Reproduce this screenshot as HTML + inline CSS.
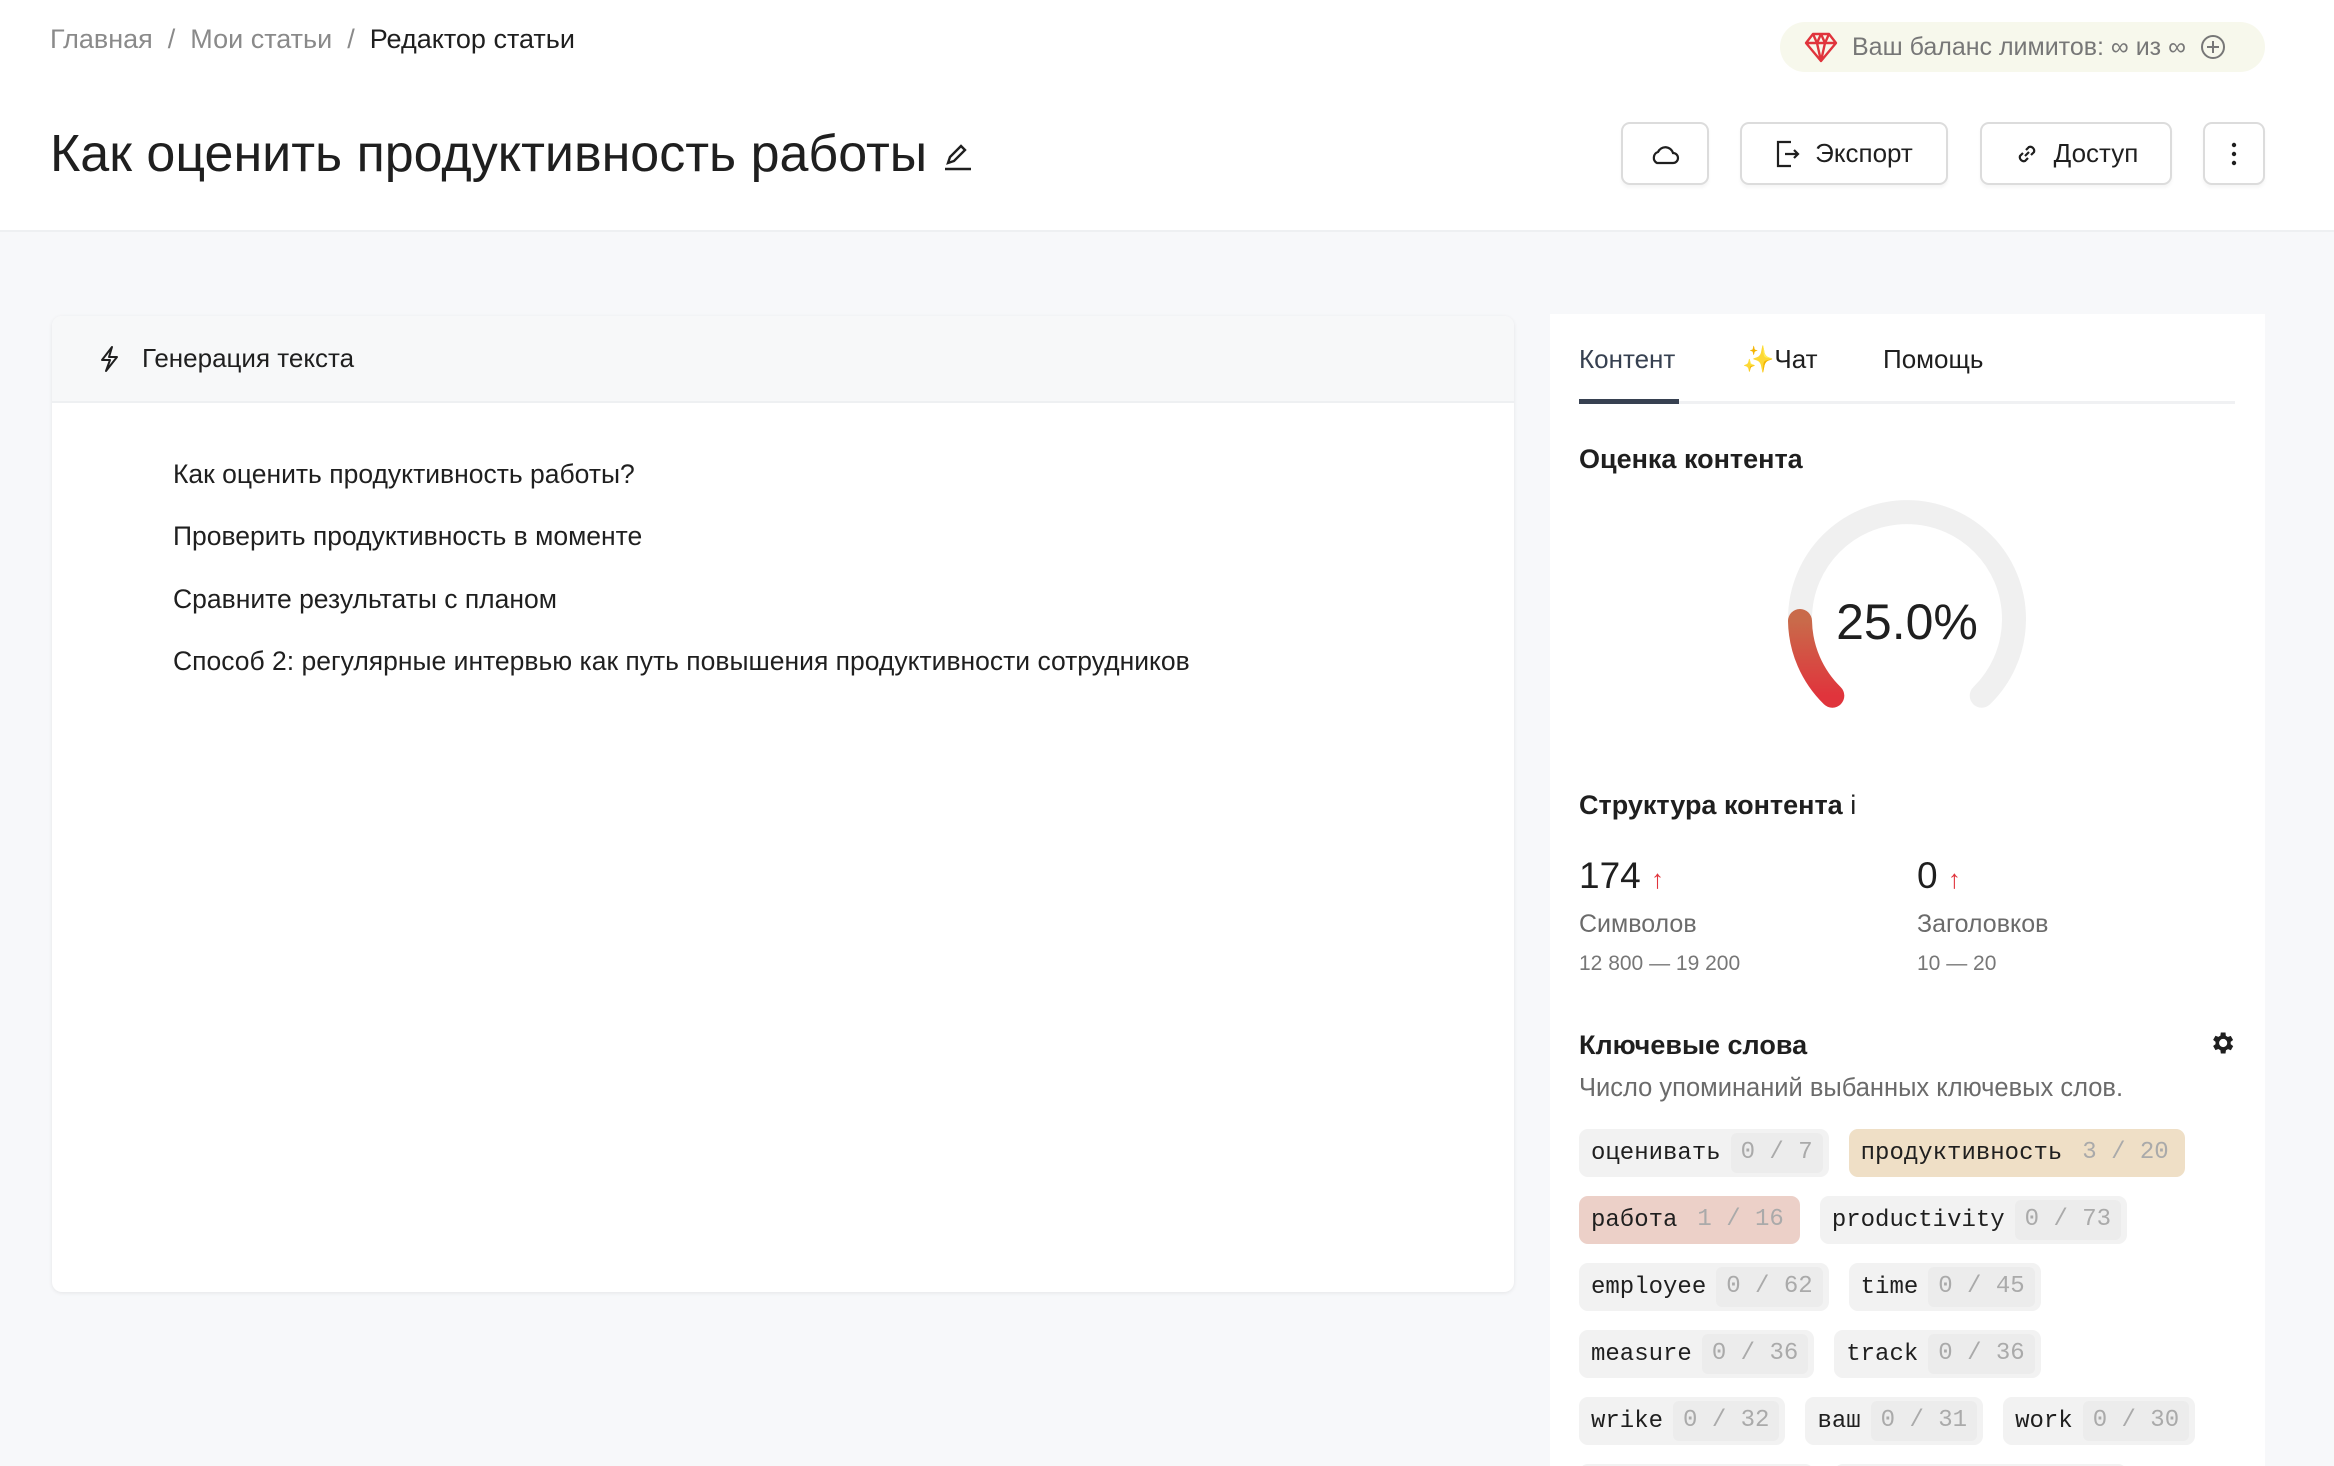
<!DOCTYPE html>
<html style="width:2334px;height:1466px;overflow:hidden"><head><meta charset="utf-8"><style>
*{box-sizing:border-box;margin:0;padding:0}
body{width:2334px;height:1466px;overflow:hidden;background:#f7f8fa;font-family:"Liberation Sans","Noto Sans CJK SC",sans-serif;color:#1f1f1f;position:relative}
.hdr{position:absolute;left:0;top:0;width:2334px;height:232px;background:#fff;border-bottom:2px solid #eef0f2}
.abs{position:absolute}
.bc{left:50px;top:24px;font-size:27px;color:#8a8a8a}
.bc b{font-weight:normal;color:#1f1f1f}
.bc span{margin:0 15px}
.pill{left:1780px;top:22px;width:485px;height:50px;border-radius:25px;background:#f7f8ec;font-size:25px;color:#777;display:flex;align-items:center;padding-left:24px;gap:14px}
.title{left:50px;top:124px;font-size:52px;color:#1f1f1f}
.btn{top:122px;height:63px;border:2px solid #dcdcdc;border-radius:9px;background:#fff;display:flex;align-items:center;justify-content:center;gap:14px;font-size:26px;box-shadow:0 3px 3px rgba(0,0,0,.04)}
.card{left:52px;top:316px;width:1462px;height:976px;background:#fff;border-radius:10px;box-shadow:0 1px 4px rgba(0,0,0,.08);overflow:hidden}
.ch{height:87px;background:#f7f8f9;border-bottom:2px solid #eef0f2;display:flex;align-items:center;padding-left:46px;gap:22px;font-size:26px}
.line{position:absolute;left:121px;font-size:26.5px}
.rp{left:1550px;top:314px;width:715px;height:1152px;background:#fff;overflow:hidden}
.tab{top:30px;font-size:26px}
.sec{font-size:27px;font-weight:bold;left:29px}
.chips{left:29px;top:815px;width:680px;display:flex;flex-wrap:wrap;column-gap:20px;row-gap:19px}
.chip{height:48px;border-radius:9px;background:#f2f2f2;display:flex;align-items:center;padding:0 6px 0 12px;font-family:"Liberation Mono",monospace;font-size:24px;color:#1f1f1f}
.chip i{font-style:normal;color:#aaa;background:#ececec;padding:0 10px;height:40px;line-height:40px;margin-left:10px;border-radius:6px;white-space:pre}
</style></head><body>
<div class="hdr"></div>
<div class="abs bc">Главная<span>/</span>Мои статьи<span>/</span><b>Редактор статьи</b></div>
<div class="abs pill"><svg width="34" height="32" viewBox="0 0 34 32" fill="none" stroke="#e0343c" stroke-width="2.4" stroke-linejoin="round"><path d="M9 3h16l7 9-15 18L2 12z M2 12h30 M9 3l4 9 4 18 4-18 4-9 M13 12l4-9 4 9"/></svg><span>Ваш баланс лимитов: ∞ из ∞</span><svg width="26" height="26" viewBox="0 0 26 26" fill="none" stroke="#777" stroke-width="2"><circle cx="13" cy="13" r="11"/><path d="M13 7v12M7 13h12"/></svg></div>
<div class="abs title">Как оценить продуктивность работы <svg width="30" height="30" viewBox="0 0 30 30" fill="none" stroke="#1f1f1f" stroke-width="2.4"><path d="M6 22l2-6 11-11 4 4-11 11z M3 28h26"/></svg></div>
<div class="abs btn" style="left:1621px;width:88px"><svg width="30" height="22" viewBox="0 0 30 22" fill="none" stroke="#1f1f1f" stroke-width="2.2"><path d="M7 20h16a5 5 0 000-10 8 8 0 00-15-1 6 6 0 00-1 11z"/></svg></div>
<div class="abs btn" style="left:1740px;width:208px"><svg width="26" height="28" viewBox="0 0 26 28" fill="none" stroke="#1f1f1f" stroke-width="2.2"><path d="M16 2H3v24h13M10 14h13M19 10l4 4-4 4"/></svg>Экспорт</div>
<div class="abs btn" style="left:1980px;width:192px"><svg width="26" height="26" viewBox="0 0 26 26" fill="none" stroke="#1f1f1f" stroke-width="2.2"><path d="M11 15l4-4M9 12l-3 3a4 4 0 005 5l3-3M17 14l3-3a4 4 0 00-5-5l-3 3"/></svg>Доступ</div>
<div class="abs btn" style="left:2203px;width:62px"><svg width="6" height="24" viewBox="0 0 6 24" fill="#1f1f1f"><circle cx="3" cy="3" r="2.2"/><circle cx="3" cy="12" r="2.2"/><circle cx="3" cy="21" r="2.2"/></svg></div>

<div class="abs card">
<div class="ch"><svg width="22" height="28" viewBox="0 0 22 28" fill="none" stroke="#1f1f1f" stroke-width="2" stroke-linejoin="round"><path d="M14 2L4 15h8l-4 11 11-14h-8z"/></svg>Генерация текста</div>
<div class="line" style="top:143px">Как оценить продуктивность работы?</div>
<div class="line" style="top:205px">Проверить продуктивность в моменте</div>
<div class="line" style="top:268px">Сравните результаты с планом</div>
<div class="line" style="top:330px">Способ 2: регулярные интервью как путь повышения продуктивности сотрудников</div>
</div>

<div class="abs rp">
<div class="abs tab" style="left:29px;color:#374151">Контент</div>
<div class="abs tab" style="left:192px"><span style="color:#f5c542">✨</span>Чат</div>
<div class="abs tab" style="left:333px">Помощь</div>
<div class="abs" style="left:29px;top:87px;width:656px;height:3px;background:#f0f1f3"></div>
<div class="abs" style="left:29px;top:85px;width:100px;height:5px;background:#374151"></div>
<div class="abs sec" style="top:130px">Оценка контента</div>
<svg class="abs" style="left:229px;top:179px" width="256" height="256" viewBox="0 0 256 256">
<defs><linearGradient id="g" x1="0" y1="1" x2="0" y2="0"><stop offset="0" stop-color="#e0343c"/><stop offset="1" stop-color="#c96a4a"/></linearGradient></defs>
<path d="M53.3 202.7A107 107 0 1 1 202.7 202.7" fill="none" stroke="#f0f0f0" stroke-width="24" stroke-linecap="round"/>
<path d="M53.3 202.7A107 107 0 0 1 21 128" fill="none" stroke="url(#g)" stroke-width="24" stroke-linecap="round"/>
<text x="128" y="146" text-anchor="middle" font-family="Liberation Sans" font-size="50" fill="#1f1f1f">25.0%</text>
</svg>
<div class="abs sec" style="top:476px">Структура контента <span style="font-weight:normal">i</span></div>
<div class="abs" style="left:29px;top:541px;font-size:37px">174 <span style="color:#e0343c;font-size:26px;font-weight:bold">↑</span></div>
<div class="abs" style="left:367px;top:541px;font-size:37px">0 <span style="color:#e0343c;font-size:26px;font-weight:bold">↑</span></div>
<div class="abs" style="left:29px;top:596px;font-size:25px;color:#6b6b6b">Символов</div>
<div class="abs" style="left:367px;top:596px;font-size:25px;color:#6b6b6b">Заголовков</div>
<div class="abs" style="left:29px;top:638px;font-size:21px;color:#777">12 800 — 19 200</div>
<div class="abs" style="left:367px;top:638px;font-size:21px;color:#777">10 — 20</div>
<div class="abs sec" style="top:716px">Ключевые слова</div>
<svg class="abs" style="left:658px;top:715px" width="28" height="28" viewBox="0 0 24 24"><path fill="#1f1f1f" d="M19.4 13a7.5 7.5 0 000-2l2.1-1.6-2-3.5-2.5 1a7 7 0 00-1.7-1L15 3h-4l-.4 2.8a7 7 0 00-1.7 1l-2.5-1-2 3.5L6.5 11a7.5 7.5 0 000 2l-2.1 1.6 2 3.5 2.5-1a7 7 0 001.7 1L11 21h4l.4-2.8a7 7 0 001.7-1l2.5 1 2-3.5zM13 15.5a3.5 3.5 0 110-7 3.5 3.5 0 010 7z"/></svg>
<div class="abs" style="left:29px;top:760px;font-size:25.5px;color:#6b6b6b">Число упоминаний выбанных ключевых слов.</div>
<div class="abs chips">
<div class="chip">оценивать<i>0 / 7</i></div>
<div class="chip" style="background:#efdfc6">продуктивность<i style="background:#efdfc6">3 / 20</i></div>
<div class="chip" style="background:#ecd0c8">работа<i style="background:#ecd0c8">1 / 16</i></div>
<div class="chip">productivity<i>0 / 73</i></div>
<div class="chip">employee<i>0 / 62</i></div>
<div class="chip">time<i>0 / 45</i></div>
<div class="chip">measure<i>0 / 36</i></div>
<div class="chip">track<i>0 / 36</i></div>
<div class="chip">wrike<i>0 / 32</i></div>
<div class="chip">ваш<i>0 / 31</i></div>
<div class="chip">work<i>0 / 30</i></div>
<div class="chip">manager<i>0 / 29</i></div>
<div class="chip">performance<i>0 / 28</i></div>
</div>
</div>
</body></html>
